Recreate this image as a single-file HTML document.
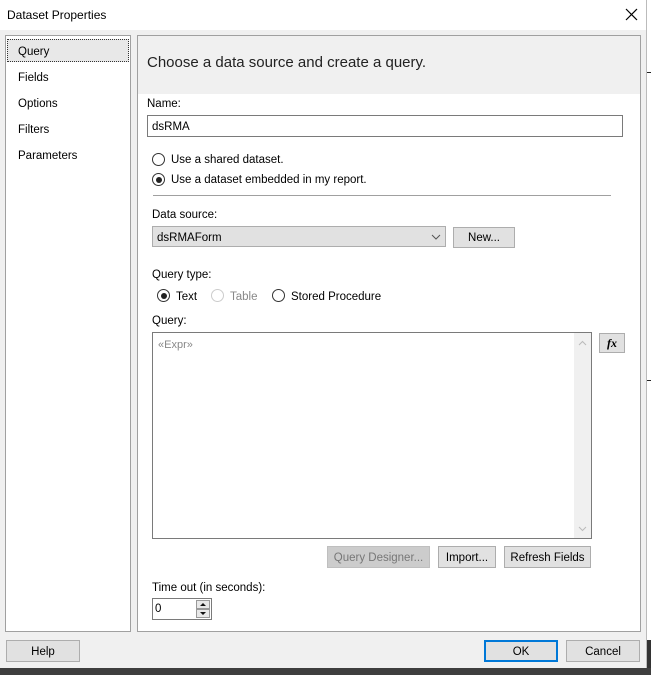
<!DOCTYPE html>
<html><head><style>
*{box-sizing:border-box;margin:0;padding:0}
body{width:651px;height:675px;overflow:hidden;background:#f0f0f0;font-family:"Liberation Sans",sans-serif;font-size:11.5px;color:#000;position:relative}
.a{position:absolute}
.t{position:absolute;margin-top:2px}
.btn{position:absolute;background:#e1e1e1;border:1px solid #adadad;text-align:center;line-height:19px;font-size:11.5px}
.radio{position:absolute;width:13px;height:13px;border:1px solid #333;border-radius:50%;background:#fff}
.radio.on::after{content:"";position:absolute;left:2.5px;top:2.5px;width:6px;height:6px;border-radius:50%;background:#222}
</style></head><body>
<div class="a" style="left:0;top:0;width:646px;height:30px;background:#fff"></div>
<div class="a" style="left:7px;top:8px;font-size:12px">Dataset Properties</div>
<svg class="a" style="left:625px;top:8px" width="13" height="13"><path d="M1 1L12 12M12 1L1 12" stroke="#000" stroke-width="1.2"/></svg>
<div class="a" style="left:646px;top:0;width:5px;height:675px;background:#fff;border-left:1px solid #bbb"></div>
<div class="a" style="left:647px;top:72px;width:4px;height:1px;background:#222"></div>
<div class="a" style="left:647px;top:380px;width:4px;height:1px;background:#222"></div>
<div class="a" style="left:647px;top:640px;width:4px;height:28px;background:#333"></div>
<div class="a" style="left:0;top:668px;width:651px;height:7px;background:#3e3e3e"></div>

<div class="a" style="left:5px;top:35px;width:126px;height:597px;background:#fff;border:1px solid #a0a0a0"></div>
<div class="a" style="left:7px;top:39px;width:122px;height:23px;background:#e8e8e8;border:1px dotted #333"></div>
<div class="t" style="left:18px;top:44px">Query</div>
<div class="t" style="left:18px;top:70px">Fields</div>
<div class="t" style="left:18px;top:96px">Options</div>
<div class="t" style="left:18px;top:122px">Filters</div>
<div class="t" style="left:18px;top:148px">Parameters</div>

<div class="a" style="left:137px;top:35px;width:504px;height:597px;background:#fff;border:1px solid #a0a0a0"></div>
<div class="a" style="left:138px;top:36px;width:502px;height:58px;background:#f0f0f0"></div>
<div class="a" style="left:147px;top:54px;font-size:15px;color:#222">Choose a data source and create a query.</div>
<div class="t" style="left:147px;top:96px">Name:</div>
<div class="a" style="left:147px;top:115px;width:476px;height:22px;border:1px solid #7a7a7a;background:#fff;padding:5px 4px 0">dsRMA</div>
<div class="radio" style="left:152px;top:153px"></div>
<div class="t" style="left:171px;top:152px">Use a shared dataset.</div>
<div class="radio on" style="left:152px;top:173px"></div>
<div class="t" style="left:171px;top:172px">Use a dataset embedded in my report.</div>
<div class="a" style="left:153px;top:195px;width:458px;height:1px;background:#a0a0a0"></div>
<div class="t" style="left:152px;top:207px">Data source:</div>
<div class="a" style="left:152px;top:226px;width:294px;height:21px;background:#e1e1e1;border:1px solid #adadad;padding:5px 4px 0">dsRMAForm</div>
<svg class="a" style="left:431px;top:234px" width="10" height="6"><path d="M1 1L5 5L9 1" stroke="#555" fill="none"/></svg>
<div class="btn" style="left:453px;top:227px;width:62px;height:21px;line-height:21px">New...</div>
<div class="t" style="left:152px;top:267px">Query type:</div>
<div class="radio on" style="left:157px;top:289px"></div>
<div class="t" style="left:176px;top:289px">Text</div>
<div class="radio" style="left:211px;top:289px;border-color:#ccc"></div>
<div class="t" style="left:230px;top:289px;color:#888">Table</div>
<div class="radio" style="left:272px;top:289px"></div>
<div class="t" style="left:291px;top:289px">Stored Procedure</div>
<div class="t" style="left:152px;top:313px">Query:</div>
<div class="a" style="left:152px;top:332px;width:440px;height:207px;border:1px solid #7a7a7a;background:#fff"></div>
<div class="a" style="left:574px;top:333px;width:17px;height:205px;background:#f0f0f0"></div>
<svg class="a" style="left:578px;top:340px" width="9" height="6"><path d="M1 5L4.5 1.5L8 5" stroke="#bbb" fill="none"/></svg>
<svg class="a" style="left:578px;top:526px" width="9" height="6"><path d="M1 1L4.5 4.5L8 1" stroke="#bbb" fill="none"/></svg>
<div class="t" style="left:158px;top:337px;color:#888;font-size:11px">«Expr»</div>
<div class="btn" style="left:599px;top:333px;width:26px;height:20px;font-family:'Liberation Serif',serif;font-style:italic;font-weight:bold;font-size:12px;line-height:18px">fx</div>
<div class="btn" style="left:327px;top:546px;width:103px;height:22px;background:#cccccc;border-color:#bfbfbf;color:#777;line-height:22px">Query Designer...</div>
<div class="btn" style="left:438px;top:546px;width:58px;height:22px;line-height:22px">Import...</div>
<div class="btn" style="left:504px;top:546px;width:87px;height:22px;line-height:22px">Refresh Fields</div>
<div class="t" style="left:152px;top:580px">Time out (in seconds):</div>
<div class="a" style="left:152px;top:598px;width:60px;height:22px;border:1px solid #7a7a7a;background:#fff;padding:4px 2px 0">0</div>
<div class="a" style="left:196px;top:600px;width:14px;height:9px;border:1px solid #999;background:#e8e8e8"></div>
<div class="a" style="left:196px;top:609px;width:14px;height:9px;border:1px solid #999;background:#e8e8e8"></div>
<svg class="a" style="left:199px;top:602px" width="8" height="15"><path d="M1 4L4 1L7 4Z M1 10L4 13L7 10Z" fill="#111"/></svg>

<div class="btn" style="left:6px;top:640px;width:74px;height:22px;line-height:22px">Help</div>
<div class="btn" style="left:484px;top:640px;width:74px;height:22px;border:2px solid #0078d7;line-height:20px">OK</div>
<div class="btn" style="left:566px;top:640px;width:74px;height:22px;line-height:22px">Cancel</div>
</body></html>
